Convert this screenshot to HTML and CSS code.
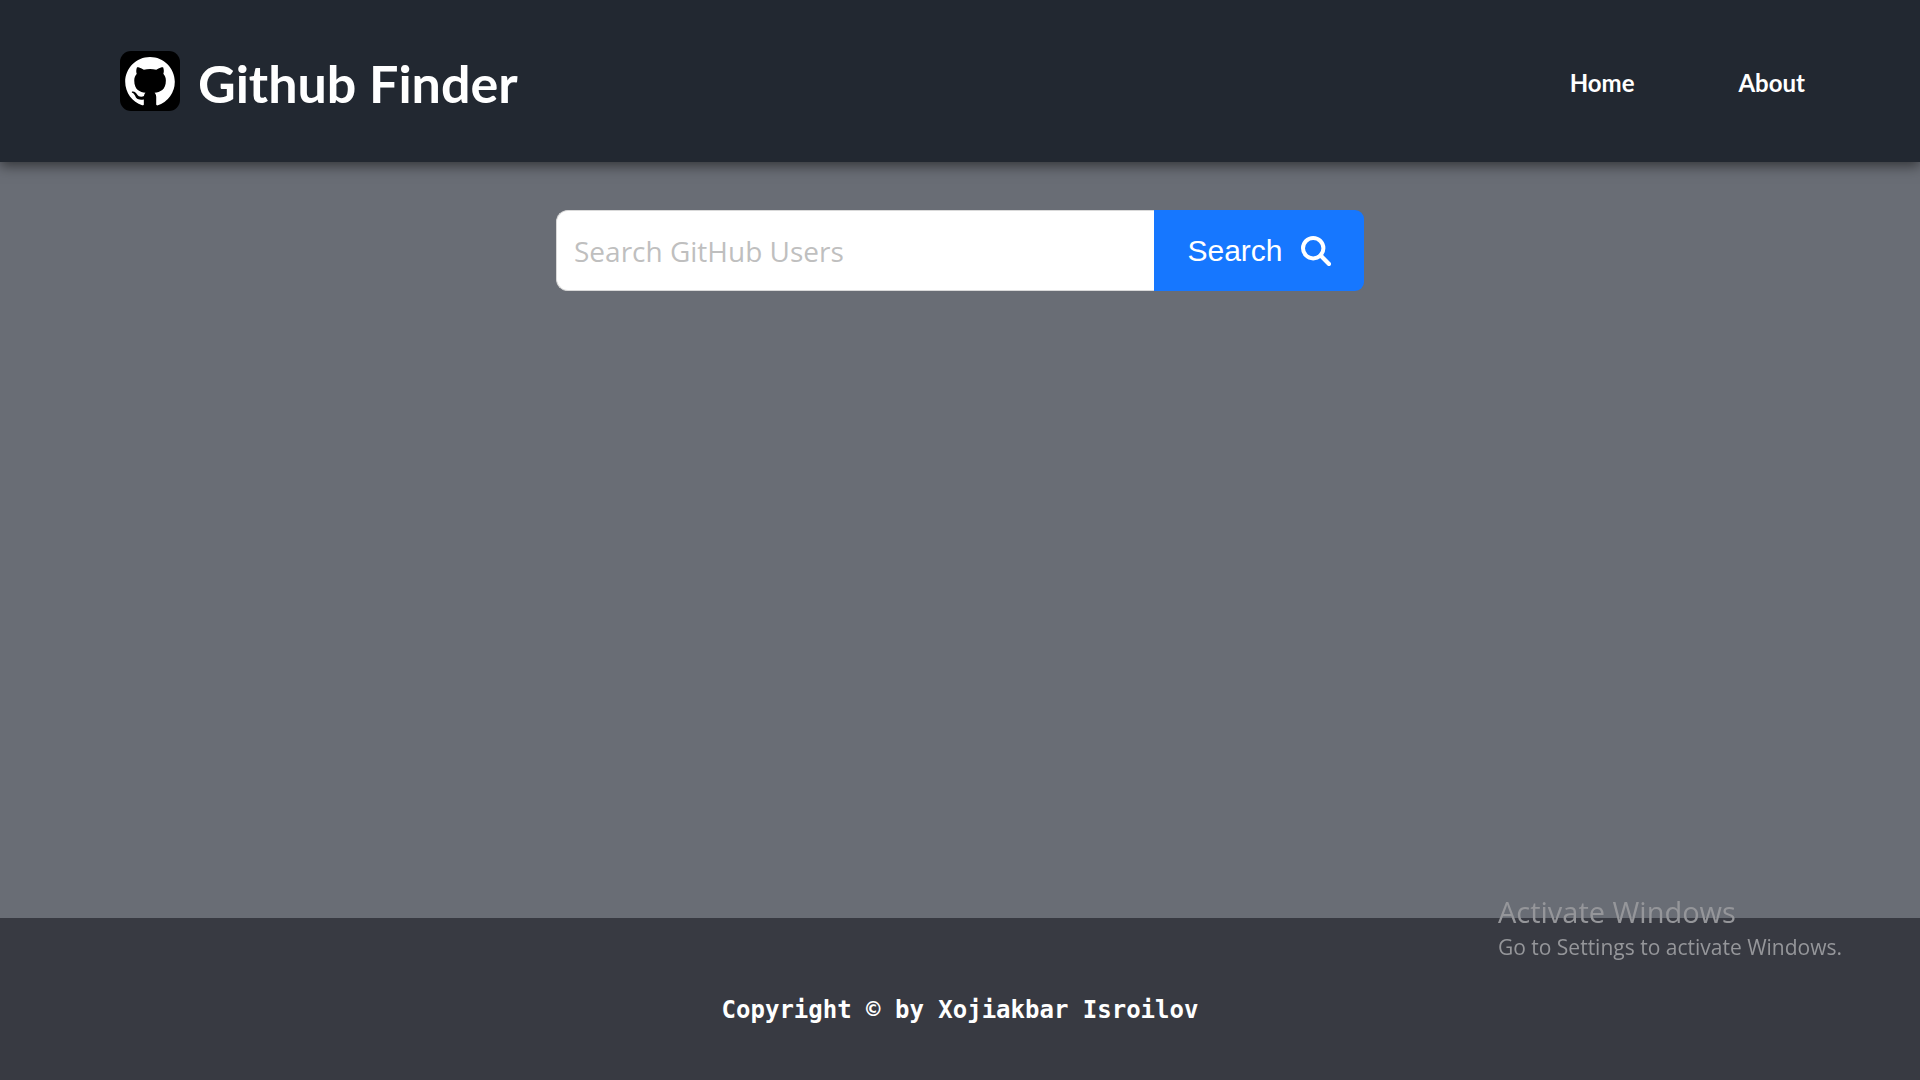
FILE: index.html
```html
<!DOCTYPE html>
<html lang="en">
<head>
  <meta charset="utf-8">
  <meta name="viewport" content="width=device-width, initial-scale=1">
  <title>Github Finder</title>
  <link rel="stylesheet" href="styles.css">
</head>
<body>
  <header class="header">
    <a class="brand" href="#">
      <svg class="brand-logo" viewBox="0 0 60 60" aria-hidden="true">
        <rect width="60" height="60" rx="11" fill="#000"/>
        <path transform="translate(5.2 6) scale(3.1)" fill="#fff" d="M8 0C3.58 0 0 3.58 0 8c0 3.54 2.29 6.53 5.47 7.59.4.07.55-.17.55-.38 0-.19-.01-.82-.01-1.49-2.01.37-2.53-.49-2.69-.94-.09-.23-.48-.94-.82-1.13-.28-.15-.68-.52-.01-.53.63-.01 1.08.58 1.23.82.72 1.21 1.87.87 2.33.66.07-.52.28-.87.51-1.07-1.78-.2-3.64-.89-3.64-3.95 0-.87.31-1.59.82-2.15-.08-.2-.36-1.02.08-2.12 0 0 .67-.21 2.2.82.64-.18 1.32-.27 2-.27s1.36.09 2 .27c1.53-1.04 2.2-.82 2.2-.82.44 1.1.16 1.92.08 2.12.51.56.82 1.27.82 2.15 0 3.07-1.87 3.75-3.65 3.95.29.25.54.73.54 1.48 0 1.07-.01 1.93-.01 2.2 0 .21.15.46.55.38A8.01 8.01 0 0 0 16 8c0-4.42-3.58-8-8-8z"/>
      </svg>
      <span class="brand-name">Github Finder</span>
    </a>
    <nav class="nav">
      <a class="nav-link" href="#">Home</a>
      <a class="nav-link" href="#about">About</a>
    </nav>
  </header>

  <main class="main">
    <form class="search" role="search">
      <input class="search-input" type="text" placeholder="Search GitHub Users" aria-label="Search GitHub Users">
      <button class="search-button" type="submit">
        <span>Search</span>
        <svg class="search-icon" viewBox="0 0 30 30" aria-hidden="true">
          <circle cx="12.2" cy="12.2" r="10.2" fill="none" stroke="#fff" stroke-width="4"/>
          <path d="M19.6 19.6L28 28" stroke="#fff" stroke-width="4.2" stroke-linecap="round"/>
        </svg>
      </button>
    </form>
  </main>

  <footer class="footer">
    <p class="copyright">Copyright © by Xojiakbar Isroilov</p>
  </footer>

  <aside class="watermark">
    <p class="watermark-title">Activate Windows</p>
    <p class="watermark-text">Go to Settings to activate Windows.</p>
  </aside>
</body>
</html>
```
FILE: styles.css
```css
* {
  box-sizing: border-box;
}

body {
  display: flex;
  flex-direction: column;
  min-height: 100vh;
  margin: 0;
  background: #696d75;
  color: #fff;
  font-family: Lato, sans-serif;
}

p {
  margin: 0;
}

a {
  color: inherit;
  text-decoration: none;
}

.header {
  display: flex;
  align-items: center;
  justify-content: space-between;
  padding: 48px 115px 48px 120px;
  background: #222831;
  box-shadow: 0 4px 12px rgba(0, 0, 0, 0.5);
}

.brand {
  display: flex;
  align-items: center;
  gap: 18px;
}

.brand-logo {
  width: 60px;
  height: 60px;
}

.brand-name {
  padding-top: 4px;
  font-size: 52px;
  font-weight: 700;
  line-height: 62px;
}

.nav {
  display: flex;
  gap: 104px;
  padding-top: 4px;
}

.nav-link {
  font-size: 24px;
  font-weight: 700;
  line-height: 32px;
}

.main {
  flex: 1;
  padding: 48px 24px;
}

.search {
  display: flex;
  max-width: 808px;
  margin: 0 auto;
}

.search-input {
  flex: 1;
  min-width: 0;
  padding: 20px 17px 18px;
  border: 1px solid #d9d9d9;
  border-right: 0;
  border-radius: 12px 0 0 12px;
  background: #fff;
  color: #222831;
  font-family: "Open Sans", sans-serif;
  font-size: 28px;
  line-height: 41px;
}

.search-input::placeholder {
  color: #bfbfbf;
  opacity: 1;
}

.search-button {
  display: flex;
  align-items: center;
  justify-content: center;
  gap: 18px;
  width: 210px;
  padding: 0;
  border: 0;
  border-radius: 0 9px 9px 0;
  background: #1677ff;
  color: #fff;
  font-family: "Liberation Sans", sans-serif;
  font-size: 30px;
}

.search-icon {
  width: 30px;
  height: 30px;
}

.footer {
  padding: 76px 24px 54px;
  background: #383a42;
  text-align: center;
}

.copyright {
  font-family: "DejaVu Sans Mono", monospace;
  font-size: 24px;
  font-weight: 700;
  line-height: 32px;
}

.watermark {
  position: fixed;
  right: 78px;
  bottom: 118px;
  color: #95969a;
  font-family: "Open Sans", sans-serif;
  pointer-events: none;
}

.watermark-title {
  font-size: 29px;
  line-height: 40px;
}

.watermark-text {
  font-size: 21px;
  line-height: 30px;
}
```
